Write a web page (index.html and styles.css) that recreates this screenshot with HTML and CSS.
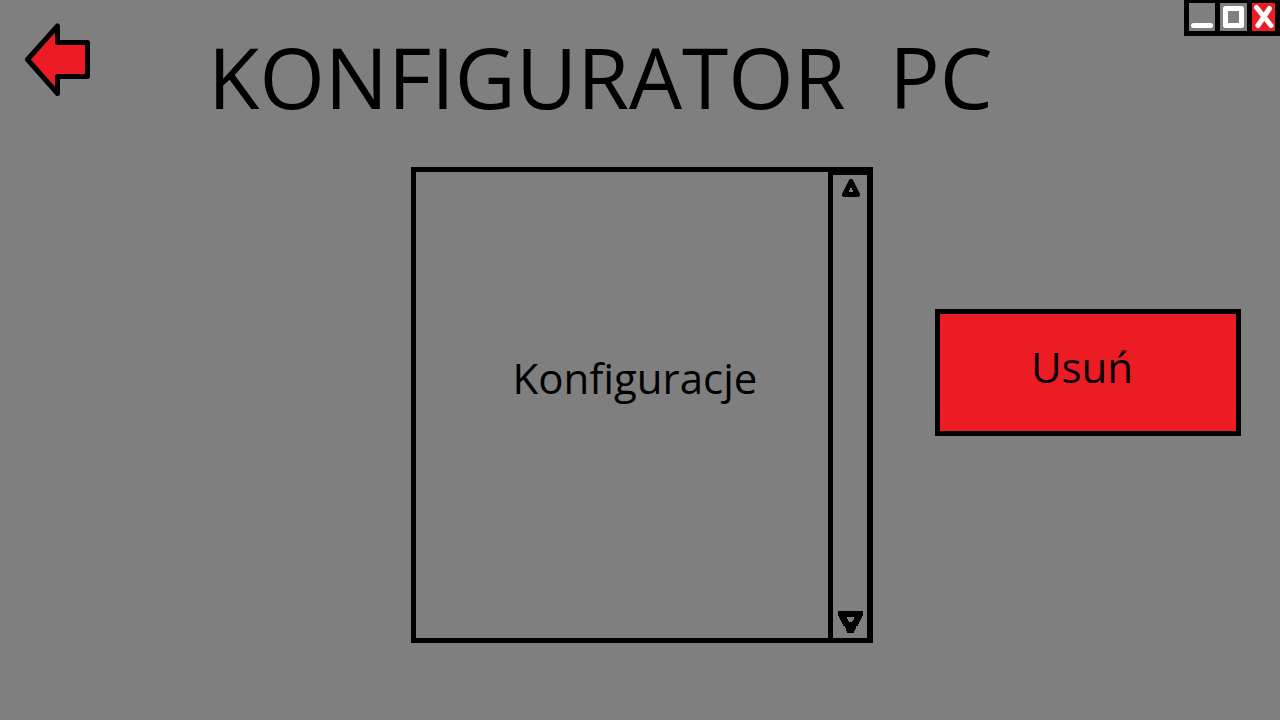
FILE: index.html
```html
<!DOCTYPE html>
<html lang="pl">
<head>
<meta charset="utf-8">
<title>Konfigurator PC</title>
<link rel="stylesheet" href="styles.css">
</head>
<body>
<header class="header">
  <button class="back" type="button" aria-label="Wstecz">
    <svg width="66" height="74" viewBox="0 0 66 74" aria-hidden="true">
      <path d="M2.500 36.500 32.500 3v16.500H62.500v34H32.500V70.500Z" fill="#ed1c24" stroke="#000" stroke-width="5" stroke-linejoin="round"/>
    </svg>
  </button>
  <h1 class="title">KONFIGURATOR  PC</h1>
  <div class="window-controls">
    <button class="control minimize" type="button" aria-label="Minimalizuj">
      <svg width="26" height="28" viewBox="0 0 26 28" aria-hidden="true"><path d="M4.500 22.500h17" stroke="#fff" stroke-width="5" stroke-linecap="round"/></svg>
    </button>
    <button class="control maximize" type="button" aria-label="Maksymalizuj">
      <svg width="27" height="28" viewBox="0 0 27 28" aria-hidden="true"><path d="M5.500 5.500h16v17h-16z" fill="none" stroke="#fff" stroke-width="5" stroke-linejoin="round"/></svg>
    </button>
    <button class="control close" type="button" aria-label="Zamknij">
      <svg width="23" height="28" viewBox="0 0 23 28" aria-hidden="true"><path d="M4.500 4.500 19 22.500M17.500 5.500 6 22.500" stroke="#fff" stroke-width="5" stroke-linecap="round"/></svg>
    </button>
  </div>
</header>
<main class="main">
  <section class="panel">
    <h2 class="panel-label">Konfiguracje</h2>
    <div class="scrollbar">
      <button class="scroll-button" type="button" aria-label="Przewiń w górę">
        <svg width="18" height="18" viewBox="0 0 18 18" aria-hidden="true"><path d="M9 2.500 2.500 15.500h13Z" stroke="#000" stroke-width="5" stroke-linejoin="round"/><path d="M8 9h2v2h1v2H7v-2h1Z" fill="#7f7f7f"/></svg>
      </button>
      <button class="scroll-button" type="button" aria-label="Przewiń w dół">
        <svg width="26" height="22" viewBox="0 0 26 22" aria-hidden="true"><path d="M0 0h25v5h-1v2h-1v2h-1v2h-1v2h-1v2h-2v3h-1v2h-1v2H9v-2H8v-3H7v-2H5v-2H4v-2H3V9H2V7H1V5H0Z"/><path d="M9 6h7v3h-1v1h-1v1h-3v-1h-1V8H9Z" fill="#7f7f7f"/></svg>
      </button>
    </div>
  </section>
  <div class="actions">
    <button class="delete" type="button">Usuń</button>
  </div>
</main>
</body>
</html>
```
FILE: styles.css
```css
* {
  box-sizing: border-box;
}

body {
  margin: 0;
  min-height: 100vh;
  display: flex;
  flex-direction: column;
  background: #7f7f7f;
  color: #000;
  font-family: "Open Sans", "Noto Sans", sans-serif;
}

button {
  margin: 0;
  padding: 0;
  border: 0;
  background: none;
  color: inherit;
  font: inherit;
  cursor: pointer;
}

svg {
  display: block;
}

.header {
  display: flex;
  align-items: flex-start;
  padding-left: 25px;
}

.back {
  margin-top: 23px;
}

.title {
  margin: 27px 0 40px 117px;
  font-size: 84px;
  line-height: 100px;
  font-weight: 400;
  white-space: pre;
}

.window-controls {
  display: flex;
  gap: 5px;
  margin-left: auto;
  padding: 3px 5px 5px;
  background: #000;
}

.control {
  background: #7f7f7f;
}

.close {
  background: #ed1c24;
}

.main {
  flex: 1;
  display: grid;
  grid-template-columns: 411fr 462fr 407fr;
  padding-bottom: 77px;
}

.panel {
  grid-column: 2;
  display: flex;
  border: 5px solid #000;
  border-right-width: 6px;
}

.panel-label {
  flex: 1;
  align-self: center;
  margin: 0;
  padding: 0 0 54px 26px;
  font-size: 42px;
  line-height: 50px;
  font-weight: 400;
  text-align: center;
}

.scrollbar {
  display: flex;
  flex-direction: column;
  align-items: center;
  justify-content: space-between;
  width: 39px;
  padding: 4px 0 5px 2px;
  border: solid #000;
  border-width: 3px 0 0 5px;
}

.actions {
  padding: 142px 39px 0 62px;
}

.delete {
  width: 100%;
  padding: 28px 12px 39px 0;
  border: 5px solid #000;
  background: #ed1c24;
  font-size: 42px;
  line-height: 50px;
}
```
